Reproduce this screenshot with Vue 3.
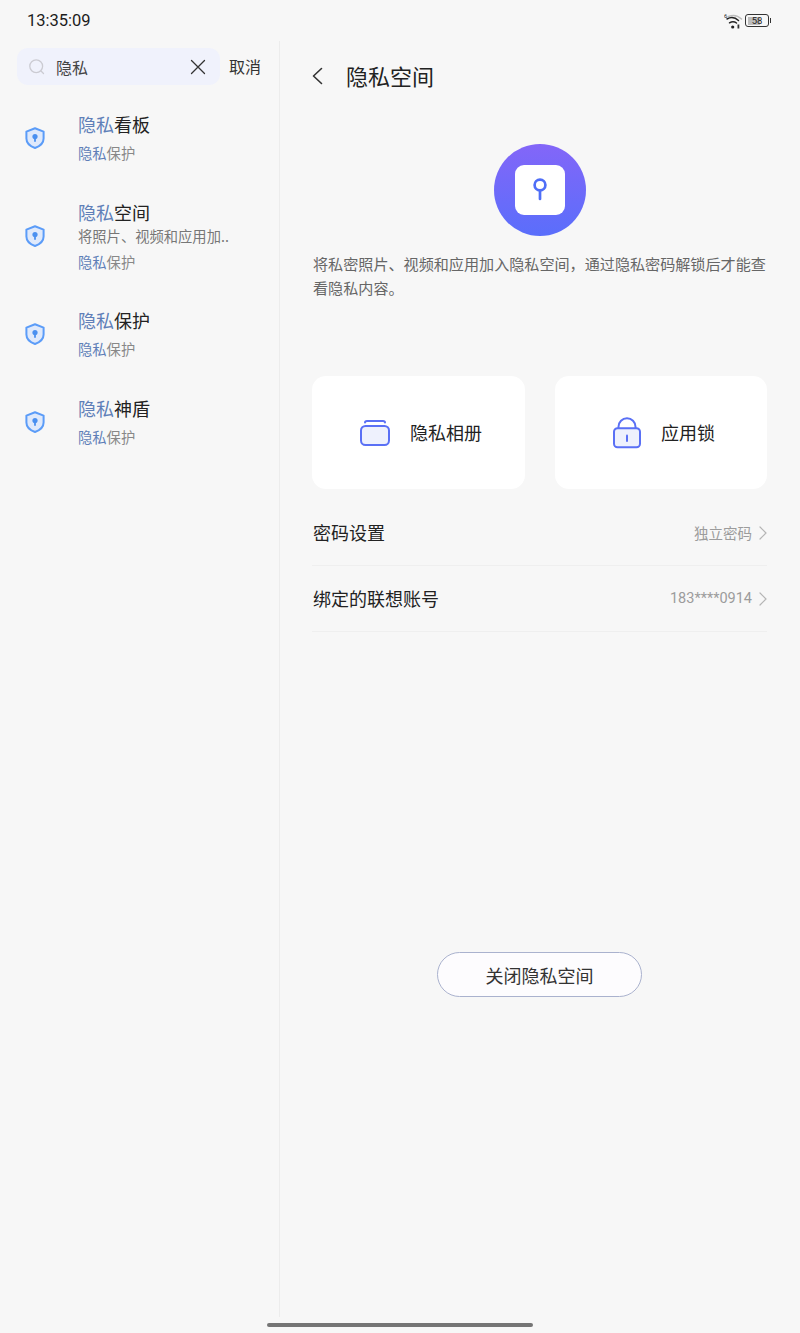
<template>
  <div class="screen">
    <div class="status-bar">
      <span class="clock">13:35:09</span>
      <div class="status-icons">
        <svg class="wifi" width="20" height="16" viewBox="0 0 20 16" fill="none">
          <path d="M4.500 3.500C8.500 1.800 13.500 2.200 17.500 6" stroke="#bdbdbd" stroke-width="1.500" stroke-linecap="round" />
          <path d="M3 6C7 3.800 11 4.200 14.500 7.500" stroke="#222" stroke-width="1.500" stroke-linecap="round" />
          <path d="M5.500 9.800C8 8.300 10.500 8.500 12.500 10" stroke="#222" stroke-width="1.500" stroke-linecap="round" />
          <circle cx="8.700" cy="14" r="1.600" fill="#222" />
          <rect x="13.500" y="11.500" width="1.800" height="4" fill="#333" />
          <text x="0" y="4.500" class="wifi-six">6</text>
        </svg>
        <div class="battery"><span class="battery-fill"></span><span class="battery-num">58</span></div>
        <span class="battery-tip"></span>
      </div>
    </div>

    <div class="body">
      <aside class="side">
        <div class="search-row">
          <div class="search-box">
            <svg class="search-icon" width="16" height="16" viewBox="0 0 16 16" fill="none">
              <circle cx="7.200" cy="7.200" r="6.400" stroke="#cbcbd2" stroke-width="1.300" />
              <path d="M12 12l2.500 2.500" stroke="#cbcbd2" stroke-width="1.300" stroke-linecap="round" />
            </svg>
            <span class="search-text">隐私</span>
            <svg class="clear-icon" width="16" height="16" viewBox="0 0 16 16" fill="none">
              <path d="M1.500 1.500l13 13M14.500 1.500l-13 13" stroke="#333" stroke-width="1.300" stroke-linecap="round" />
            </svg>
          </div>
          <span class="cancel">取消</span>
        </div>

        <ul class="results">
          <li v-for="item in results" :key="item.name" class="result" :class="{ 'result--long': item.desc }">
            <svg class="shield" width="20" height="24" viewBox="0 0 20 24" fill="none">
              <path d="M10 2.200L18.600 5.600V12.500C18.600 16.800 15 20.200 10 22C5 20.200 1.400 16.800 1.400 12.500V5.600Z" fill="#dfe9fb" stroke="#5b9cf8" stroke-width="2" stroke-linejoin="round" />
              <circle cx="10" cy="10.500" r="2.600" fill="#4a90f0" />
              <rect x="9.100" y="11" width="1.800" height="5" rx="0.900" fill="#4a90f0" />
            </svg>
            <div class="result-text">
              <div class="result-title"><span class="hl">隐私</span>{{ item.name }}</div>
              <div v-if="item.desc" class="result-desc">{{ item.desc }}</div>
              <div class="result-sub"><span class="hl">隐私</span>保护</div>
            </div>
          </li>
        </ul>
      </aside>

      <main class="detail">
        <header class="detail-head">
          <svg width="12" height="18" viewBox="0 0 12 18" fill="none">
            <path d="M9.500 1.500L1.500 9l8 7.500" stroke="#333" stroke-width="1.600" stroke-linecap="round" stroke-linejoin="round" />
          </svg>
          <h1 class="detail-title">隐私空间</h1>
        </header>

        <div class="hero">
          <div class="hero-circle">
            <div class="hero-tile">
              <svg width="16" height="24" viewBox="0 0 16 24" fill="none">
                <circle cx="8" cy="7" r="5.400" stroke="#4f6ef7" stroke-width="2.700" />
                <path d="M8 12.500V21" stroke="#4f6ef7" stroke-width="2.700" stroke-linecap="round" />
              </svg>
            </div>
          </div>
        </div>

        <p class="intro">将私密照片、视频和应用加入隐私空间，通过隐私密码解锁后才能查看隐私内容。</p>

        <div class="cards">
          <div class="card">
            <svg width="32" height="28" viewBox="0 0 32 28" fill="none">
              <path d="M6 3.500Q6 2 8 2H24Q26 2 26 3.500" stroke="#5a70f5" stroke-width="2" stroke-linecap="round" />
              <rect x="2" y="7" width="28" height="19" rx="4.500" fill="#eef1fd" stroke="#5a70f5" stroke-width="2" />
            </svg>
            <span class="card-label">隐私相册</span>
          </div>
          <div class="card card--lock">
            <svg width="30" height="34" viewBox="0 0 30 34" fill="none">
              <path d="M6.500 12.200V10.700a8.500 8.500 0 0 1 17 0v1.500" stroke="#5a70f5" stroke-width="2" />
              <rect x="2" y="12.200" width="26" height="19" rx="3.500" fill="#eef1fd" stroke="#5a70f5" stroke-width="2" />
              <path d="M15 19.500v5.500" stroke="#5a70f5" stroke-width="2" stroke-linecap="round" />
            </svg>
            <span class="card-label">应用锁</span>
          </div>
        </div>

        <div class="rows">
          <div class="row">
            <span class="row-label">密码设置</span>
            <span class="row-value">独立密码</span>
            <svg class="chevron" width="8" height="14" viewBox="0 0 8 14" fill="none">
              <path d="M1 1l6 6-6 6" stroke="#b5b5b5" stroke-width="1.200" stroke-linecap="round" stroke-linejoin="round" />
            </svg>
          </div>
          <div class="row">
            <span class="row-label">绑定的联想账号</span>
            <span class="row-value">183****0914</span>
            <svg class="chevron" width="8" height="14" viewBox="0 0 8 14" fill="none">
              <path d="M1 1l6 6-6 6" stroke="#b5b5b5" stroke-width="1.200" stroke-linecap="round" stroke-linejoin="round" />
            </svg>
          </div>
        </div>

        <div class="close-wrap">
          <button class="close-btn">关闭隐私空间</button>
        </div>
      </main>
    </div>

    <div class="home-bar"></div>
  </div>
</template>

<script setup>
const results = [
  { name: '看板' },
  { name: '空间', desc: '将照片、视频和应用加..' },
  { name: '保护' },
  { name: '神盾' }
]
</script>

<style>
html, body { margin: 0; background: #f7f7f7; }
</style>

<style scoped>
.screen {
  width: 800px;
  height: 1333px;
  background: #f7f7f7;
  display: flex;
  flex-direction: column;
  font-family: "Noto Sans CJK SC", "Noto Sans", sans-serif;
  color: #222;
  overflow: hidden;
  position: relative;
}

.status-bar {
  height: 41px;
  flex: none;
  display: flex;
  align-items: center;
  justify-content: space-between;
  padding: 0 29px 0 27px;
}
.clock { font-family: Roboto, sans-serif; font-size: 16.500px; color: #1c1c1c; }
.status-icons { display: flex; align-items: center; }
.wifi-six { font: 6px Roboto, sans-serif; fill: #222; }
.wifi { margin-right: 1px; }
.battery {
  width: 24px;
  height: 13px;
  box-sizing: border-box;
  border: 1px solid #333;
  border-radius: 3px;
  padding: 1.500px;
  position: relative;
  display: flex;
}
.battery-fill { width: 65%; background: #bdbdbd; }
.battery-num {
  position: absolute;
  left: 0;
  right: 0;
  top: 0;
  text-align: center;
  font: 400 9.500px/11px Roboto, sans-serif;
  color: #222;
}
.battery-tip { width: 1px; height: 5px; background: #333; margin-left: 1px; }

.body { flex: 1; display: flex; min-height: 0; }

.side {
  width: 280px;
  flex: none;
  box-sizing: border-box;
  border-right: 1px solid #ececec;
  padding-top: 7px;
  margin-bottom: 16px;
}
.search-row { display: flex; align-items: center; padding-left: 17px; }
.search-box {
  width: 203px;
  height: 37px;
  box-sizing: border-box;
  background: #f0f2fc;
  border-radius: 11px;
  display: flex;
  align-items: center;
  padding: 0 14px 0 12px;
}
.search-text { margin-left: 11px; flex: 1; font-size: 16px; color: #444; }
.cancel { margin: 0 0 2px 9px; font-size: 16px; color: #333; }

.results { list-style: none; margin: 9px 0 0; padding: 0; }
.result {
  height: 88px;
  box-sizing: border-box;
  display: flex;
  align-items: center;
  padding-left: 25px;
}
.result--long { height: 108px; }
.shield { flex: none; }
.result-text { margin-left: 33px; margin-top: -2px; }
.result-title { font-size: 18px; line-height: 26px; color: #222; }
.result-desc { font-size: 14.300px; line-height: 20px; color: #777; margin-top: 1px; }
.result-sub { font-size: 14.300px; line-height: 20px; color: #888; margin-top: 6px; }
.hl { color: #5f7fb8; }

.detail { flex: 1; min-width: 0; padding: 0 33px 0 32px; display: flex; flex-direction: column; }
.detail-head { height: 72px; display: flex; align-items: center; flex: none; }
.detail-head svg { margin-bottom: 2px; }
.detail-title { margin: 0 0 4px 22px; font-size: 22px; font-weight: 400; color: #222; }

.hero { display: flex; justify-content: center; margin: 31px 0 0 1px; }
.hero-circle {
  width: 92px;
  height: 92px;
  border-radius: 50%;
  background: linear-gradient(180deg, #8366f8, #5a6efb);
  display: flex;
  align-items: center;
  justify-content: center;
}
.hero-tile {
  width: 50px;
  height: 50px;
  border-radius: 9px;
  background: #fff;
  display: flex;
  align-items: center;
  justify-content: center;
}

.intro { margin: 15px 0 0 1px; font-size: 15.100px; line-height: 24px; color: #666; }

.cards { display: grid; grid-template-columns: 213px 212px; gap: 30px; margin-top: 77px; }
.card {
  height: 113px;
  background: #fff;
  border-radius: 14px;
  display: flex;
  align-items: center;
  padding-left: 47px;
  box-sizing: border-box;
}
.card--lock { padding-left: 57px; }
.card-label { margin: 0 0 2px 19px; font-size: 18px; color: #222; }

.rows { margin-top: 11px; }
.row {
  height: 66px;
  box-sizing: border-box;
  border-bottom: 1px solid #efefef;
  display: flex;
  align-items: center;
}
.row-label { flex: 1; margin: 0 0 1px 1px; font-size: 18px; color: #222; }
.row-value { font-size: 14.500px; color: #9c9c9c; font-family: Roboto, "Noto Sans CJK SC", sans-serif; }
.chevron { margin-left: 7px; }

.close-wrap { display: flex; justify-content: center; margin-top: 320px; }
.close-btn {
  width: 205px;
  height: 45px;
  border: 1px solid #aab2ce;
  border-radius: 23px;
  background: #fdfcfe;
  font: 18px "Noto Sans CJK SC", sans-serif;
  color: #333;
  padding: 0;
}

.home-bar {
  position: absolute;
  left: 267px;
  top: 1323px;
  width: 266px;
  height: 4px;
  border-radius: 2px;
  background: #757575;
}
</style>
